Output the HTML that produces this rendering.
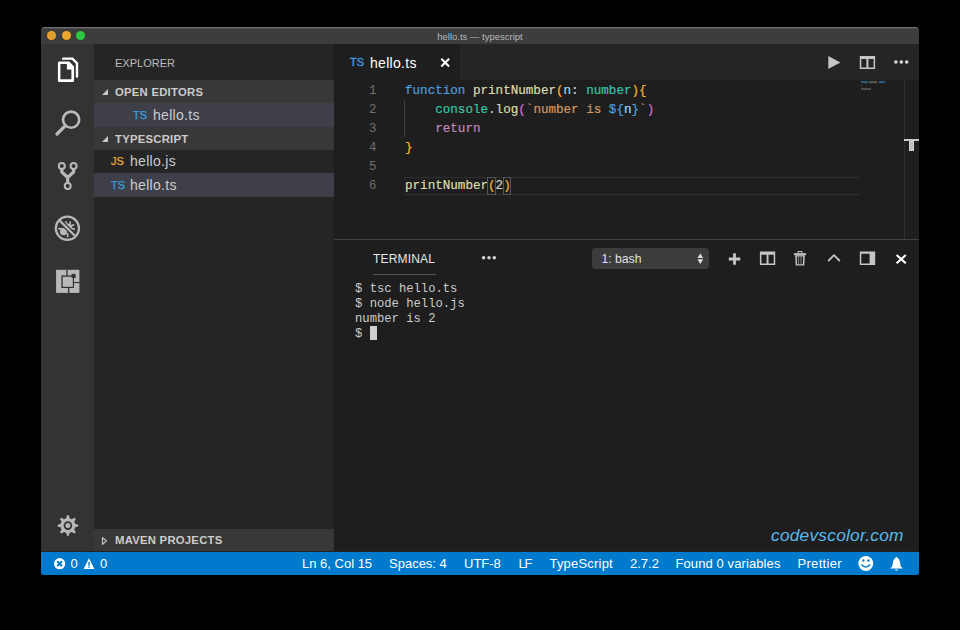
<!DOCTYPE html>
<html><head><meta charset="utf-8">
<style>
*{margin:0;padding:0;box-sizing:border-box}
html,body{width:960px;height:630px;background:#000;overflow:hidden;font-family:"Liberation Sans",sans-serif}
.a{position:absolute}
.t{position:absolute;white-space:pre;line-height:1}
.mono{font-family:"Liberation Mono",monospace}
.tl{position:absolute;width:9px;height:9px;border-radius:50%;top:31px}
.hdr{position:absolute;left:94px;width:240px;background:#383838}
.hdrt{position:absolute;font-weight:bold;font-size:11.3px;color:#cccccc;letter-spacing:0.25px}
.tri{position:absolute;width:0;height:0;border-style:solid;border-width:0 0 6px 6px;border-color:transparent transparent #c5c5c5 transparent}
.row{position:absolute;left:94px;width:240px}
.fn{position:absolute;font-size:14px;color:#cccccc;letter-spacing:0.3px}
.ts{position:absolute;font-weight:normal;font-size:11px;color:#36a0e0;letter-spacing:0px;-webkit-text-stroke:0.25px #36a0e0}
.js{position:absolute;font-weight:normal;font-size:11px;color:#eeaa35;letter-spacing:0px;-webkit-text-stroke:0.25px #eeaa35}
#code{position:absolute;left:334px;top:81.7px;width:585px;height:159px}
.ln{position:absolute;left:0;width:42.5px;text-align:right;font-family:"Liberation Mono",monospace;font-size:12.5px;color:#6e6e6e;line-height:19px;height:19px}
.cl{position:absolute;left:71px;font-family:"Liberation Mono",monospace;font-size:12.58px;color:#d4d4d4;-webkit-text-stroke:0.2px currentColor;line-height:19px;height:19px;white-space:pre}
.kw{color:#4a9fdf}.fnc{color:#dcdcaa}.br1{color:#f5b42a}.br2{color:#d070d6}.br3{color:#179fff}
.var{color:#9cdcfe}.typ{color:#35c6ab}.str{color:#d49862}.ret{color:#c586c0}
.term{position:absolute;left:355px;font-family:"Liberation Mono",monospace;font-size:12.2px;color:#cccccc;line-height:15px;white-space:pre}
.sb{position:absolute;top:556px;font-size:13px;color:#fff;white-space:pre;line-height:16px}
</style></head><body>
<!-- window -->
<div class="a" style="left:41px;top:27px;width:878px;height:548px;background:#1e1e1e;border-radius:5px 5px 4px 4px;overflow:hidden">
</div>
<!-- title bar -->
<div class="a" style="left:41px;top:27px;width:878px;height:17px;background:#3d3d3d;border-radius:4px 4px 0 0;border-top:1px solid #707070"></div>
<div class="a" style="left:43px;top:28px;width:874px;height:1px;background:#4c4c4c"></div>
<div class="tl" style="left:46.8px;background:#eaa52e"></div>
<div class="tl" style="left:61.5px;background:#eba82e"></div>
<div class="tl" style="left:76.2px;background:#2ac940"></div>
<svg class="a" style="left:0;top:0" width="100" height="50"><g fill="#9a6a2a"><circle cx="50.30" cy="33.65" r="0.45"/><circle cx="52.30" cy="33.65" r="0.45"/><circle cx="53.30" cy="34.75" r="0.45"/><circle cx="49.20" cy="35.65" r="0.45"/><circle cx="51.30" cy="35.65" r="0.45"/><circle cx="53.30" cy="36.65" r="0.45"/><circle cx="50.30" cy="37.65" r="0.45"/><circle cx="52.30" cy="37.65" r="0.45"/></g></svg>
<div class="t" style="left:41px;width:878px;top:32px;text-align:center;font-size:9.5px;color:#b8b8b8">hello.ts — typescript</div>

<!-- activity bar -->
<div class="a" style="left:41px;top:44px;width:53px;height:508px;background:#333333"></div>
<!-- sidebar -->
<div class="a" style="left:94px;top:44px;width:240px;height:508px;background:#252526"></div>
<div class="t" style="left:115px;top:58px;font-size:11px;color:#bbbbbb">EXPLORER</div>
<div class="hdr" style="top:80px;height:23px"></div>
<div class="hdr" style="top:127px;height:23px"></div>
<div class="row" style="top:103px;height:24px;background:#3e3f48"></div>
<div class="row" style="top:173px;height:24px;background:#3e3f48"></div>
<div class="hdr" style="top:529px;height:23px"></div>
<div class="tri" style="left:102px;top:88.6px"></div>
<div class="hdrt t" style="left:115px;top:86.9px">OPEN EDITORS</div>
<div class="ts t" style="left:133px;top:109.7px">TS</div>
<div class="fn t" style="left:153px;top:108px">hello.ts</div>
<div class="tri" style="left:102px;top:135.6px"></div>
<div class="hdrt t" style="left:115px;top:134px">TYPESCRIPT</div>
<div class="js t" style="left:111px;top:156.1px">JS</div>
<div class="fn t" style="left:130px;top:154.4px">hello.js</div>
<div class="ts t" style="left:111px;top:179.9px">TS</div>
<div class="fn t" style="left:130px;top:177.9px">hello.ts</div>
<svg class="a" style="left:100px;top:535px" width="10" height="12"><path d="M2.5,2.6 L6.4,6 L2.5,9.4 Z" fill="none" stroke="#c5c5c5" stroke-width="1.2" stroke-linejoin="round"/></svg>
<div class="hdrt t" style="left:115px;top:535.3px">MAVEN PROJECTS</div>

<!-- editor tabs -->
<div class="a" style="left:334px;top:44px;width:585px;height:36px;background:#252526"></div>
<div class="a" style="left:334px;top:44px;width:126px;height:36px;background:#1e1e1e"></div>
<div class="ts t" style="left:350px;top:57.2px;font-size:11px;color:#3d9fe0;-webkit-text-stroke:0.35px #3d9fe0">TS</div>
<div class="fn" style="left:370px;top:55px;color:#ffffff">hello.ts</div>

<!-- code -->
<div id="code">
  <div class="ln" style="top:0">1</div>
  <div class="ln" style="top:19px">2</div>
  <div class="ln" style="top:38px">3</div>
  <div class="ln" style="top:57px">4</div>
  <div class="ln" style="top:76px">5</div>
  <div class="ln" style="top:95px">6</div>
  <div class="cl" style="top:0"><span class="kw">function</span> <span class="fnc">printNumber</span><span class="br1">(</span><span class="var">n</span>: <span class="typ">number</span><span class="br1">)</span><span class="br1">{</span></div>
  <div class="cl" style="top:19px">    <span class="typ">console</span>.<span class="fnc">log</span><span class="br2">(</span><span class="str">`number is </span><span class="kw">${</span><span class="var">n</span><span class="kw">}</span><span class="str">`</span><span class="br2">)</span></div>
  <div class="cl" style="top:38px">    <span class="ret">return</span></div>
  <div class="cl" style="top:57px"><span class="br1">}</span></div>
  <div class="cl" style="top:95px"><span class="fnc">printNumber</span><span class="br1">(</span><span style="color:#cfd0c4">2</span><span class="br1">)</span></div>
</div>


<!-- editor decorations -->
<div class="a" style="left:404px;top:100px;width:1px;height:37px;background:#404040"></div>
<div class="a" style="left:404px;top:177px;width:456px;height:18px;border-top:1px solid #303030;border-bottom:1px solid #303030"></div>
<div class="a" style="left:487px;top:177px;width:9px;height:18px;border:1px solid #555555"></div>
<div class="a" style="left:503px;top:177px;width:8px;height:18px;border:1px solid #555555"></div>
<!-- minimap -->
<div class="a" style="left:861px;top:81px;width:7px;height:2px;background:#275a80"></div>
<div class="a" style="left:869px;top:81px;width:6px;height:2px;background:#55554f"></div>
<div class="a" style="left:875px;top:81px;width:2px;height:2px;background:#6e5a2a"></div>
<div class="a" style="left:879px;top:81px;width:6px;height:2px;background:#275a80"></div>
<div class="a" style="left:863px;top:83px;width:20px;height:1px;background:#2a2a2a"></div>
<div class="a" style="left:861px;top:85px;width:1px;height:1px;background:#555"></div>
<div class="a" style="left:861px;top:88px;width:10px;height:1.5px;background:#4c4c48"></div>
<!-- overview ruler -->
<div class="a" style="left:904px;top:80px;width:1px;height:159px;background:#2e2e2e"></div>
<div class="a" style="left:904px;top:139px;width:15px;height:2px;background:#c8c8c8"></div>
<div class="a" style="left:909px;top:141px;width:5px;height:10px;background:#c0c0c0;border:1px solid #d0d0d0"></div>
<!-- panel -->
<div class="a" style="left:334px;top:239px;width:585px;height:1px;background:#404040"></div>
<div class="t" style="left:373px;top:252.5px;font-size:12px;letter-spacing:0.17px;color:#e7e7e7">TERMINAL</div>
<div class="a" style="left:372.5px;top:273.7px;width:63.3px;height:1px;background:#555555"></div>
<div class="a" style="left:592px;top:248.3px;width:117px;height:21.2px;background:#3c3c3c;border-radius:4px"></div>
<div class="t" style="left:601.5px;top:252.5px;font-size:12.2px;color:#e0e0e0">1: bash</div>

<div class="term" style="top:281.5px">$ tsc hello.ts
$ node hello.js
number is 2
$ </div>
<div class="a" style="left:370px;top:326px;width:7px;height:14px;background:#d0d0d0"></div>

<!-- status bar -->
<div class="a" style="left:41px;top:551px;width:878px;height:1px;background:#232323"></div>
<div class="a" style="left:41px;top:552px;width:878px;height:23px;background:#007acc;border-radius:0 0 2.5px 2.5px"></div>
<div class="sb" style="left:70.5px">0</div>
<div class="sb" style="left:100px">0</div>
<div class="sb" style="left:302px">Ln 6, Col 15</div>
<div class="sb" style="left:389px">Spaces: 4</div>
<div class="sb" style="left:464px">UTF-8</div>
<div class="sb" style="left:518.5px;letter-spacing:-1.2px">LF</div>
<div class="sb" style="left:549.5px;letter-spacing:0.2px">TypeScript</div>
<div class="sb" style="left:630px">2.7.2</div>
<div class="sb" style="left:675.5px;letter-spacing:0.1px">Found 0 variables</div>
<div class="sb" style="left:797.5px;letter-spacing:0.3px">Prettier</div>

<div class="t" style="left:771px;top:526.5px;font-family:'Liberation Sans',sans-serif;font-style:italic;font-size:17.3px;letter-spacing:0.25px;color:#5ab8ec">codevscolor.com</div>

<svg class="a" style="left:0;top:0" width="960" height="630" viewBox="0 0 960 630">
<!-- files icon -->
<path fill="#ffffff" fill-rule="evenodd" d="M59.4,61.4 H69.3 L74.1,66.6 V80.5 Q74.1,82 72.6,82 H59.4 Q57.9,82 57.9,80.5 V62.9 Q57.9,61.4 59.4,61.4 Z M60.4,64.1 V79.3 H71.4 V69.6 H66.9 V64.1 Z"/>
<path fill="#ffffff" d="M63.4,57.4 H72.8 L78.2,62.8 V76.4 Q78.2,77.8 77,77.8 Q75.8,77.8 75.8,76.4 V63.8 L71.8,59.8 H62 V58.8 Q62,57.4 63.4,57.4 Z"/>
<!-- search -->
<g stroke="#bababa" fill="none">
<circle cx="71.1" cy="119.7" r="8.1" stroke-width="2.6"/>
<path d="M65.2,125.8 L57,134" stroke-width="3.3" stroke-linecap="round"/>
</g>
<!-- git -->
<g stroke="#b8b8b8" fill="none">
<circle cx="61.8" cy="166" r="3.0" stroke-width="2.0"/>
<circle cx="73.6" cy="166" r="3.0" stroke-width="2.0"/>
<circle cx="67.7" cy="186" r="3.0" stroke-width="2.0"/>
<path d="M61.8,169 V172 L67.7,177.5 L73.6,172 V169 M67.7,177 V183.2" stroke-width="3.2"/>
</g>
<!-- debug -->
<g fill="#b8b8b8">
<circle cx="63.6" cy="231.6" r="3.7"/>
<rect x="58.2" y="227.9" width="4.6" height="1.7"/>
<rect x="66.8" y="233.2" width="1.7" height="4"/>
<circle cx="68.6" cy="227.2" r="3.4"/>
</g>
<g stroke="#b8b8b8" stroke-width="1.7" fill="none">
<path d="M68.3,227.5 L65.6,221.4 M68.3,227.5 L70.6,221.6 M68.3,227.5 L74.2,224.4 M68.3,227.5 L75,229.4"/>
</g>
<g fill="none">
<circle cx="67.4" cy="228.3" r="11.6" stroke="#b8b8b8" stroke-width="2.2"/>
<clipPath id="dbgc"><circle cx="67.4" cy="228.3" r="10.4"/></clipPath><path d="M58.5,219.5 L76.3,237.2" stroke="#333333" stroke-width="4.6" clip-path="url(#dbgc)"/>
<path d="M58.9,219.9 L75.9,236.8" stroke="#b8b8b8" stroke-width="2.3"/>
</g>
<!-- extensions -->
<g>
<rect x="56.1" y="269.8" width="23.3" height="23.1" fill="#b8b8b8"/>
<rect x="66.3" y="269.8" width="1.3" height="6" fill="#333"/>
<rect x="61.4" y="275.4" width="12.6" height="12.6" fill="#333"/>
<rect x="62.7" y="276.7" width="10.1" height="10.1" fill="#b8b8b8"/>
<rect x="68" y="287.5" width="1.3" height="5.6" fill="#333"/>
<rect x="73.8" y="282" width="5.8" height="1.1" fill="#333"/>
<rect x="71.6" y="273.9" width="4" height="4.1" fill="#333"/>
</g>
<!-- gear -->
<g transform="translate(67.9,525.6)">
<path fill="#b8b8b8" d="M-2.83,-6.84 L-1.76,-7.19 L-0.93,-10.26 L0.93,-10.26 L1.76,-7.19 L2.83,-6.84 L3.84,-6.33 L6.60,-7.91 L7.91,-6.60 L6.33,-3.84 L6.84,-2.83 L7.19,-1.76 L10.26,-0.93 L10.26,0.93 L7.19,1.76 L6.84,2.83 L6.33,3.84 L7.91,6.60 L6.60,7.91 L3.84,6.33 L2.83,6.84 L1.76,7.19 L0.93,10.26 L-0.93,10.26 L-1.76,7.19 L-2.83,6.84 L-3.84,6.33 L-6.60,7.91 L-7.91,6.60 L-6.33,3.84 L-6.84,2.83 L-7.19,1.76 L-10.26,0.93 L-10.26,-0.93 L-7.19,-1.76 L-6.84,-2.83 L-6.33,-3.84 L-7.91,-6.60 L-6.60,-7.91 L-3.84,-6.33 Z"/>
<circle r="3.4" fill="none" stroke="#333" stroke-width="1.8"/>
</g>
</svg>

<svg class="a" style="left:0;top:0" width="960" height="630" viewBox="0 0 960 630">
<!-- tab close -->
<path d="M441.3,58.7 L449.1,66.5 M449.1,58.7 L441.3,66.5" stroke="#ffffff" stroke-width="2.1"/>
<!-- editor actions -->
<path d="M828.3,56 L840.4,62.5 L828.3,69 Z" fill="#c5c5c5"/>
<path fill="#c5c5c5" fill-rule="evenodd" d="M859.8,55.9 H875.1 V69.1 H859.8 Z M861.3,58.9 V67.5 H866.4 V58.9 Z M868.4,58.9 V67.5 H873.6 V58.9 Z"/>
<circle cx="895.9" cy="62" r="1.75" fill="#dcdcdc"/>
<circle cx="901.3" cy="62" r="1.75" fill="#dcdcdc"/>
<circle cx="906.7" cy="62" r="1.75" fill="#dcdcdc"/>
<!-- terminal dots -->
<circle cx="483.6" cy="257.7" r="1.75" fill="#d4d4d4"/>
<circle cx="489" cy="257.7" r="1.75" fill="#d4d4d4"/>
<circle cx="494.3" cy="257.7" r="1.75" fill="#d4d4d4"/>
<!-- dropdown arrows -->
<path d="M697.4,258 L700.3,253.5 L703.2,258 Z M697.4,259.3 L703.2,259.3 L700.3,263.9 Z" fill="#e0e0e0"/>
<!-- plus -->
<path d="M734.5,253.3 V264.8 M728.8,259 H740.3" stroke="#c5c5c5" stroke-width="2.8"/>
<!-- split -->
<path fill="#c5c5c5" fill-rule="evenodd" d="M759.9,251.6 H775.2 V264.9 H759.9 Z M761.4,254.8 V263.4 H766.6 V254.8 Z M768.5,254.8 V263.4 H773.7 V254.8 Z"/>
<!-- trash -->
<g fill="#c5c5c5">
<path fill-rule="evenodd" d="M797.6,253.3 V251.6 Q797.6,250.9 798.3,250.9 H801.7 Q802.4,250.9 802.4,251.6 V253.3 H801.3 V251.9 H798.7 V253.3 Z"/>
<rect x="794" y="253.2" width="12" height="2"/>
<path fill-rule="evenodd" d="M795.2,255.2 H804.8 L804.3,265.6 H795.7 Z M796.8,256.4 L797.1,264.2 H802.9 L803.2,256.4 Z"/>
<rect x="798.2" y="256.8" width="0.9" height="7" fill="#9a9a9a"/>
<rect x="800.6" y="256.8" width="0.9" height="7" fill="#9a9a9a"/>
</g>
<!-- chevron -->
<path d="M828.2,261 L834,255.2 L839.8,261" stroke="#c5c5c5" stroke-width="1.8" fill="none"/>
<!-- maximize -->
<path fill="#c5c5c5" fill-rule="evenodd" d="M859.8,251.6 H875.2 V264.9 H859.8 Z M861.3,253.7 V263.4 H869.6 V253.7 Z"/>
<!-- close -->
<path d="M896.6,255 L905.8,263.2 M905.8,255 L896.6,263.2" stroke="#ffffff" stroke-width="2.2"/>
<!-- status icons -->
<circle cx="59.6" cy="563.7" r="5.6" fill="#ffffff"/>
<path d="M57.2,561.3 L62,566.1 M62,561.3 L57.2,566.1" stroke="#007acc" stroke-width="2"/>
<path d="M89,558.3 L94.4,569.1 H83.6 Z" fill="#ffffff"/>
<rect x="88.3" y="561.8" width="1.4" height="4" fill="#007acc"/>
<rect x="88.3" y="566.6" width="1.4" height="1.2" fill="#007acc"/>
<g>
<circle cx="865.8" cy="563.5" r="7.4" fill="#ffffff"/>
<ellipse cx="863.3" cy="560.6" rx="1.1" ry="1.4" fill="#007acc"/>
<ellipse cx="868.4" cy="560.6" rx="1.1" ry="1.4" fill="#007acc"/>
<path d="M861.4,564.6 Q865.8,569.6 870.2,564.6" stroke="#007acc" stroke-width="1.5" fill="none"/>
</g>
<path d="M896.5,557 C894,558.5 893,560.5 892.8,563.5 L892.2,566.4 L890,568.6 H903 L900.8,566.4 L900.2,563.5 C900,560.5 899,558.5 896.5,557 Z M894.8,569.4 Q896.5,572 898.2,569.4 Z" fill="#ffffff"/>
</svg>
</body></html>
